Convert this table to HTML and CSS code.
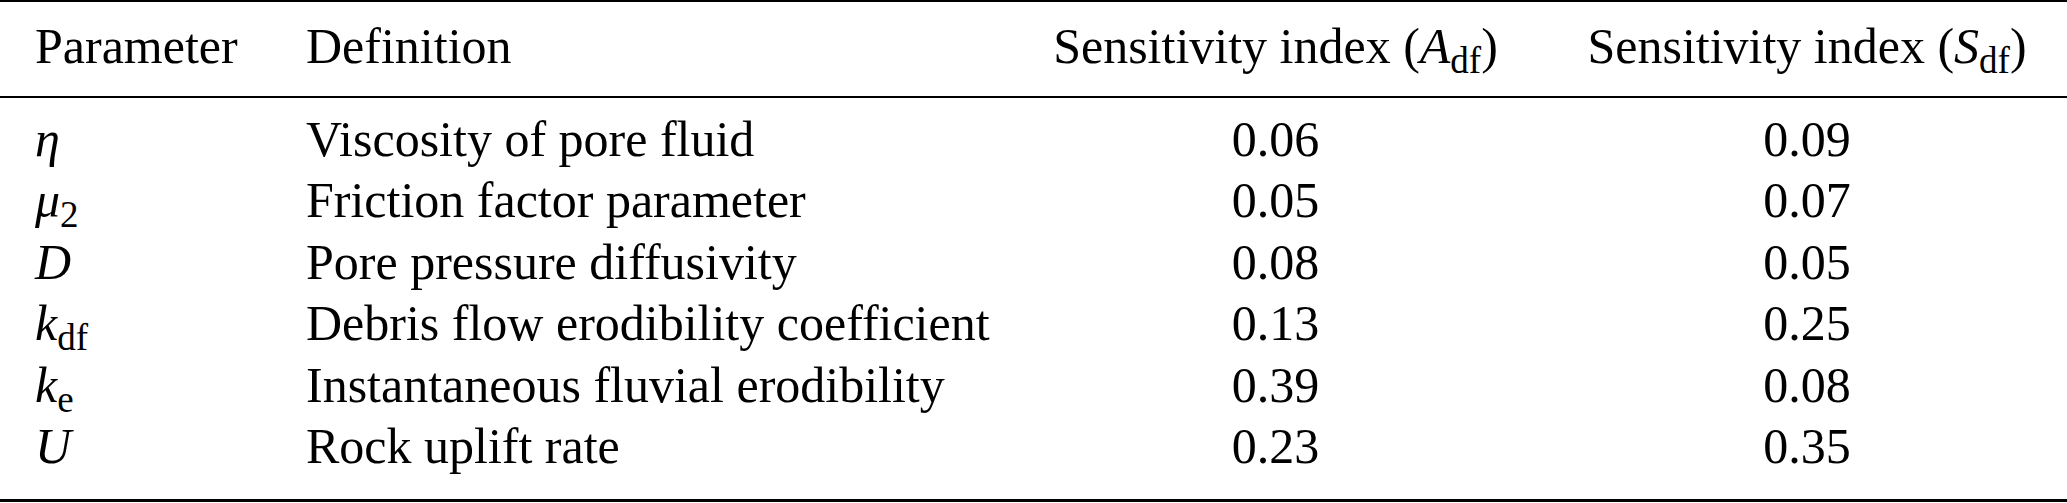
FILE: index.html
```html
<!DOCTYPE html>
<html lang="en">
<head>
<meta charset="utf-8">
<title>Sensitivity indices</title>
<link rel="stylesheet" href="styles.css">
</head>
<body>
<table class="tbl">
  <colgroup>
    <col class="c-param">
    <col class="c-def">
    <col class="c-a">
    <col class="c-s">
  </colgroup>
  <thead>
    <tr>
      <th class="param">Parameter</th>
      <th class="def">Definition</th>
      <th class="num">Sensitivity index (<i>A</i><span class="sub">df</span>)</th>
      <th class="num num-last">Sensitivity index (<i>S</i><span class="sub">df</span>)</th>
    </tr>
  </thead>
  <tbody>
    <tr>
      <td class="param"><i>η</i></td>
      <td class="def">Viscosity of pore fluid</td>
      <td class="num">0.06</td>
      <td class="num num-last">0.09</td>
    </tr>
    <tr>
      <td class="param"><i>μ</i><span class="sub">2</span></td>
      <td class="def">Friction factor parameter</td>
      <td class="num">0.05</td>
      <td class="num num-last">0.07</td>
    </tr>
    <tr>
      <td class="param"><i>D</i></td>
      <td class="def">Pore pressure diffusivity</td>
      <td class="num">0.08</td>
      <td class="num num-last">0.05</td>
    </tr>
    <tr>
      <td class="param"><i>k</i><span class="sub">df</span></td>
      <td class="def">Debris flow erodibility coefficient</td>
      <td class="num">0.13</td>
      <td class="num num-last">0.25</td>
    </tr>
    <tr>
      <td class="param"><i>k</i><span class="sub">e</span></td>
      <td class="def">Instantaneous fluvial erodibility</td>
      <td class="num">0.39</td>
      <td class="num num-last">0.08</td>
    </tr>
    <tr>
      <td class="param"><i>U</i></td>
      <td class="def">Rock uplift rate</td>
      <td class="num">0.23</td>
      <td class="num num-last">0.35</td>
    </tr>
  </tbody>
</table>
</body>
</html>
```
FILE: styles.css
```css
html, body {
  margin: 0;
  padding: 0;
  background: #ffffff;
}

body {
  font-family: "Liberation Serif", "Times New Roman", serif;
  font-size: 50px;
  color: #000000;
}

.tbl {
  width: 2067px;
  table-layout: fixed;
  border-collapse: separate;
  border-spacing: 0;
}

.c-param { width: 271px; }
.c-def { width: 750px; }
.c-a { width: 509px; }
.c-s { width: 537px; }

.tbl th,
.tbl td {
  font-weight: normal;
  white-space: nowrap;
  padding: 0;
  vertical-align: baseline;
}

.tbl th {
  line-height: 56px;
  padding-top: 16px;
  padding-bottom: 22px;
  border-top: 2px solid #000;
  border-bottom: 2px solid #000;
}

.tbl td {
  line-height: 61.4px;
}

.tbl tbody tr:first-child td {
  padding-top: 11px;
}

.tbl tbody tr:last-child td {
  padding-bottom: 22px;
  border-bottom: 3px solid #000;
}

.param,
.def {
  text-align: left;
  padding-left: 35px !important;
}

.num {
  text-align: center;
}

.num-last {
  padding-left: 17px !important;
}

.tbl i {
  font-style: italic;
}

.sub {
  font-size: 0.74em;
  line-height: 0;
  vertical-align: -10px;
}
```
